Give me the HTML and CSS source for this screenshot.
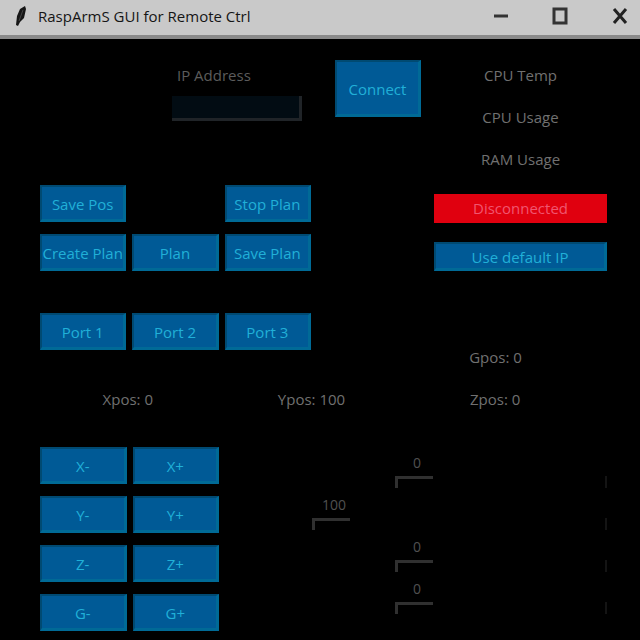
FILE: index.html
```html
<!DOCTYPE html>
<html lang="en">
<head>
<meta charset="utf-8">
<title>RaspArmS GUI for Remote Ctrl</title>
<link rel="stylesheet" href="styles.css">
</head>
<body>
<header class="titlebar">
  <svg class="feather" viewBox="0 0 12 22" aria-hidden="true"><path d="M10 1 L11 4 L9 13 L5 17 L3 21 L1 20 L2 11 L5 4 Z" fill="#151515"/><path d="M8 5 L4 16" stroke="#444" stroke-width="1"/></svg>
  <h1 class="title">RaspArmS GUI for Remote Ctrl</h1>
  <div class="window-controls">
    <button class="window-button" aria-label="Minimize"><svg viewBox="0 0 16 20"><path d="M2 10H16" stroke="#333" stroke-width="3"/></svg></button>
    <button class="window-button" aria-label="Maximize"><svg viewBox="0 0 16 20"><rect x="2" y="3" width="12" height="14" fill="none" stroke="#333" stroke-width="3"/></svg></button>
    <button class="window-button" aria-label="Close"><svg viewBox="0 0 16 20"><path d="M2 3L14 17M14 3L2 17" stroke="#222" stroke-width="3"/></svg></button>
  </div>
</header>
<main class="content">
  <div class="top">
    <div class="left">
      <div class="address">
        <label class="text" for="ip">IP Address</label>
        <input class="entry" id="ip" type="text">
      </div>
      <div class="plans">
        <button class="btn">Save Pos</button>
        <button class="btn last">Stop Plan</button>
        <button class="btn">Create Plan</button>
        <button class="btn">Plan</button>
        <button class="btn">Save Plan</button>
      </div>
      <div class="ports">
        <button class="btn">Port 1</button>
        <button class="btn">Port 2</button>
        <button class="btn">Port 3</button>
      </div>
    </div>
    <button class="btn connect">Connect</button>
    <div class="right">
      <div class="text">CPU Temp</div>
      <div class="text">CPU Usage</div>
      <div class="text">RAM Usage</div>
      <div class="state">Disconnected</div>
      <button class="btn default-ip">Use default IP</button>
      <div class="text gripper">Gpos: 0</div>
    </div>
  </div>
  <div class="positions">
    <div class="text">Xpos: 0</div>
    <div class="text">Ypos: 100</div>
    <div class="text">Zpos: 0</div>
  </div>
  <div class="bottom">
    <div class="jog">
      <button class="btn">X-</button>
      <button class="btn">X+</button>
      <button class="btn">Y-</button>
      <button class="btn">Y+</button>
      <button class="btn">Z-</button>
      <button class="btn">Z+</button>
      <button class="btn">G-</button>
      <button class="btn">G+</button>
    </div>
    <div class="sliders">
      <div class="slider" style="--value: 0.5"><output class="value" for="x">0</output><input class="range" id="x" type="range" min="-100" max="100" value="0" aria-label="X position"></div>
      <div class="slider" style="--value: 0.26"><output class="value" for="y">100</output><input class="range" id="y" type="range" min="48" max="248" value="100" aria-label="Y position"></div>
      <div class="slider" style="--value: 0.5"><output class="value" for="z">0</output><input class="range" id="z" type="range" min="-100" max="100" value="0" aria-label="Z position"></div>
      <div class="slider" style="--value: 0.5"><output class="value" for="g">0</output><input class="range" id="g" type="range" min="-100" max="100" value="0" aria-label="Gripper position"></div>
    </div>
  </div>
</main>
</body>
</html>
```

FILE: styles.css
```css
* {
  box-sizing: border-box;
}

body {
  margin: 0;
  min-height: 100vh;
  background: #000;
  color: #707070;
  font: 15px/18px "Open Sans", "Noto Sans", sans-serif;
}

.titlebar {
  display: flex;
  align-items: center;
  height: 39px;
  padding: 0 12px 4px 15px;
  background: #c9c9c9;
  border-bottom: 4px solid #8a8a8a;
}

.feather {
  width: 12px;
  height: 22px;
}

.title {
  margin: 0 0 0 11px;
  color: #151515;
  font-size: 15px;
  font-weight: 400;
  line-height: 20px;
}

.window-controls {
  display: flex;
  gap: 44px;
  margin-left: auto;
}

.window-button {
  display: flex;
  padding: 0;
  border: 0;
  background: none;
}

.window-button svg {
  width: 16px;
  height: 20px;
}

.content {
  padding: 21px 33px 8px 40px;
}

.top {
  display: grid;
  grid-template-columns: 271fr 24px 86fr 13px 173fr;
  align-items: start;
}

.address {
  display: flex;
  flex-direction: column;
  gap: 6px;
  width: 130px;
  margin: 0 9px 64px auto;
}

.address .text {
  padding-left: 5px;
  color: #5c5c5c;
  text-align: left;
}

.text {
  line-height: 30px;
  text-align: center;
  white-space: nowrap;
}

.entry {
  width: 100%;
  height: 25px;
  padding: 0 4px;
  border: solid #202428;
  border-width: 0 3px 3px 0;
  background: #020c13;
  color: #a0a0a0;
  font: inherit;
}

.plans,
.ports {
  display: grid;
  grid-template-columns: repeat(3, 1fr);
  gap: 13px 6px;
}

.ports {
  margin-top: 42px;
}

.btn {
  min-width: 0;
  height: 37px;
  padding: 2px 0 0;
  border: solid #004a72;
  border-width: 2px 3px 3px 2px;
  border-right-color: #006a96;
  border-bottom-color: #006a96;
  background: #005a96;
  color: #20b0d8;
  font: inherit;
  white-space: nowrap;
}

.plans,
.jog {
  row-gap: 12px;
}

.last {
  grid-column: 3;
}

.connect {
  grid-column: 3;
  height: 57px;
}

.right {
  grid-column: 5;
  display: flex;
  flex-direction: column;
}

.right .text + .text {
  margin-top: 12px;
}

.state {
  height: 29px;
  margin: 20px 0 19px;
  background: #e0000f;
  color: #f05570;
  line-height: 29px;
  text-align: center;
}

.default-ip {
  height: 29px;
}

.gripper {
  margin: 71px 50px 0 0;
}

.positions {
  display: grid;
  grid-template-columns: repeat(3, 1fr);
  margin: 12px 20px 33px -4px;
}

.bottom {
  display: grid;
  grid-template-columns: 179fr 384fr;
  column-gap: 4px;
}

.jog {
  display: grid;
  grid-template-columns: 1fr 1fr;
  column-gap: 6px;
}

.sliders {
  display: flex;
  flex-direction: column;
  gap: 8px;
  padding-top: 7px;
}

.slider {
  display: flex;
  flex-direction: column;
  gap: 4px;
}

.value {
  width: 38px;
  margin-left: calc((100% - 38px) * var(--value));
  padding-left: 4px;
  color: #505050;
  font-size: 14px;
  text-align: center;
}

.range {
  width: 100%;
  height: 12px;
  margin: 0;
  border-right: 2px solid #141414;
  background: none;
  appearance: none;
}

.range::-webkit-slider-thumb {
  width: 38px;
  height: 12px;
  border: solid #303030;
  border-width: 3px 0 0 3px;
  background: #000;
  appearance: none;
}
```
